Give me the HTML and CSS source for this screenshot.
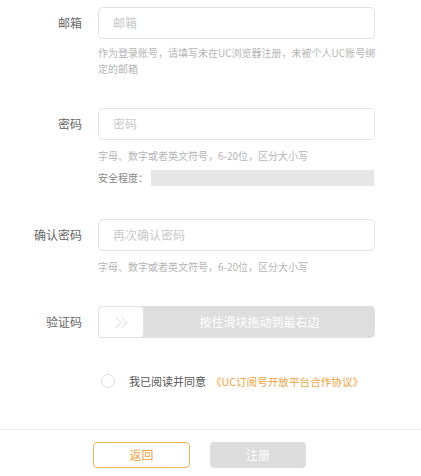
FILE: index.html
```html
<!DOCTYPE html>
<html lang="zh-CN">
<head>
<meta charset="utf-8">
<link rel="stylesheet" href="styles.css">
</head>
<body>
<div class="form">
  <div class="row">
    <div class="lbl">邮箱</div>
    <div class="field">
      <div class="input">邮箱</div>
      <p class="help">作为登录账号，请填写未在UC浏览器注册，未被个人UC账号绑定的邮箱</p>
    </div>
  </div>
  <div class="row gap-pw">
    <div class="lbl">密码</div>
    <div class="field">
      <div class="input">密码</div>
      <p class="help one">字母、数字或者英文符号，6-20位，区分大小写</p>
      <div class="strength"><span class="st-lbl">安全程度：</span><span class="st-bar"></span></div>
    </div>
  </div>
  <div class="row gap-confirm">
    <div class="lbl">确认密码</div>
    <div class="field">
      <div class="input">再次确认密码</div>
      <p class="help one">字母、数字或者英文符号，6-20位，区分大小写</p>
    </div>
  </div>
  <div class="row gap-slider">
    <div class="lbl">验证码</div>
    <div class="field">
      <div class="slider">
        <div class="handle">
          <svg width="15" height="13" viewBox="0 0 15 13"><path d="M1.5 1 L7 6.5 L1.5 12 M7.5 1 L13 6.5 L7.5 12" fill="none" stroke="#d8d8d8" stroke-width="1"/></svg>
        </div>
        <div class="track">按住滑块拖动到最右边</div>
      </div>
    </div>
  </div>
  <div class="agree">
    <span class="circle"></span>
    <span class="agree-txt">我已阅读并同意</span>
    <span class="agree-link">《UC订阅号开放平台合作协议》</span>
  </div>
</div>
<div class="footer">
  <div class="btn btn-back">返回</div>
  <div class="btn btn-reg">注册</div>
</div>
</body>
</html>
```

FILE: styles.css
```css
html, body {
  margin: 0;
  padding: 0;
  background: #fff;
}
body {
  font-family: "Noto Sans CJK SC", "Noto Sans", sans-serif;
  width: 421px;
  height: 476px;
  overflow: hidden;
}
.form {
  padding-top: 7px;
}
.row {
  display: grid;
  grid-template-columns: 82px 277px;
  column-gap: 16px;
  align-items: start;
}
.gap-pw { margin-top: 31px; }
.gap-confirm { margin-top: 33px; }
.gap-slider { margin-top: 31px; }
.lbl {
  text-align: right;
  font-size: 12px;
  line-height: 32px;
  color: #666;
}
.input {
  box-sizing: border-box;
  height: 32px;
  border: 1px solid #e3e3e3;
  border-radius: 5px;
  padding-left: 14px;
  font-size: 12px;
  line-height: 30px;
  color: #c8c8c8;
}
.help {
  margin: 6px -8px 0 0;
  font-size: 10px;
  line-height: 16px;
  color: #b5b5b5;
}
.help.one {
  margin-top: 8px;
}
.strength {
  display: flex;
  align-items: center;
  margin-top: 6px;
  height: 16px;
}
.st-lbl {
  font-size: 10px;
  line-height: 16px;
  color: #888;
  width: 53px;
}
.st-bar {
  width: 223px;
  height: 16px;
  background: #e6e6e6;
}
.slider {
  display: flex;
  height: 32px;
  background: #dedede;
  border-radius: 5px;
}
.handle {
  box-sizing: border-box;
  width: 46px;
  height: 32px;
  background: #fff;
  border: 1px solid #e3e3e3;
  border-radius: 4px;
  display: flex;
  align-items: center;
  justify-content: flex-start;
  padding-left: 15px;
}
.track {
  flex: 1;
  text-align: center;
  font-size: 12px;
  line-height: 32px;
  color: #fff;
}
.agree {
  display: flex;
  align-items: center;
  margin-top: 35px;
  padding-left: 101px;
  height: 16px;
}
.circle {
  box-sizing: border-box;
  width: 14px;
  height: 14px;
  border: 1px solid #ddd;
  border-radius: 50%;
  margin-right: 14px;
}
.agree-txt {
  font-size: 11px;
  color: #555;
  margin-right: 5px;
}
.agree-link {
  font-size: 10.6px;
  color: #f2a33a;
}
.footer {
  margin-top: 40px;
  border-top: 1px solid #eee;
  display: flex;
  gap: 20px;
  padding-left: 93px;
  padding-top: 12px;
}
.btn {
  box-sizing: border-box;
  height: 26px;
  border-radius: 4px;
  font-size: 12px;
  line-height: 24px;
  text-align: center;
}
.btn-back {
  width: 97px;
  border: 1px solid #f3b553;
  color: #f2a33a;
}
.btn-reg {
  width: 96px;
  border: 1px solid #dcdcdc;
  background: #dcdcdc;
  color: #fff;
}
```
